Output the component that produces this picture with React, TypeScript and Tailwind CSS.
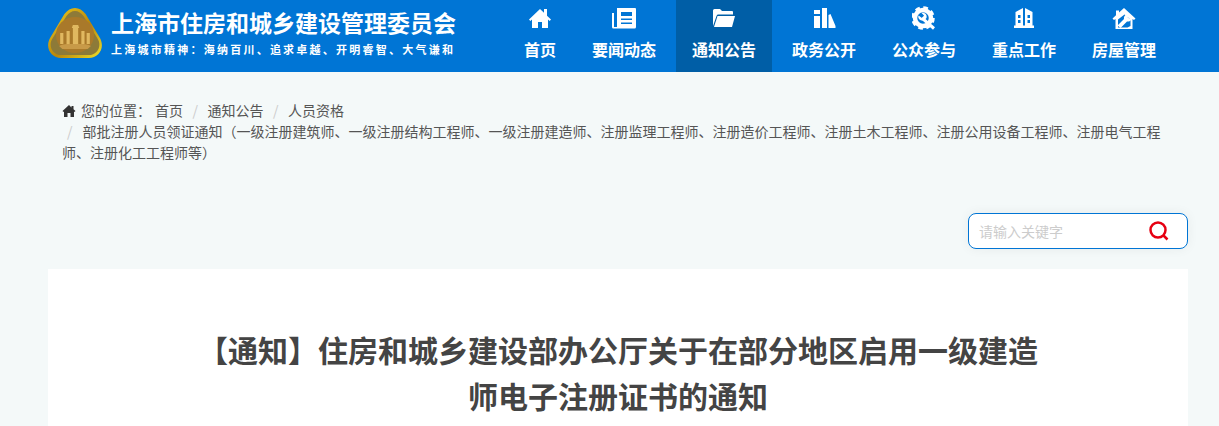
const sans = "font-['Microsoft_YaHei','Noto_Sans_CJK_SC','Liberation_Sans',sans-serif]";

const nav = [
  { label: "首页", icon: "home" },
  { label: "要闻动态", icon: "news" },
  { label: "通知公告", icon: "folder", active: true },
  { label: "政务公开", icon: "books" },
  { label: "公众参与", icon: "gear" },
  { label: "重点工作", icon: "building" },
  { label: "房屋管理", icon: "house" },
];

function NavIcon({ name, bg }: { name: string; bg: string }) {
  if (name === "home")
    return (
      <svg width="24" height="24" viewBox="0 0 24 24" fill="#fff">
        <path d="M12 4 1 14.500l1.300 1.500L4 14.600V23h6v-6h4v6h6v-8.400l1.700 1.400 1.300-1.500-4-3.800V4h-3v3.800z" transform="translate(0 -1)" />
      </svg>
    );
  if (name === "news")
    return (
      <svg width="26" height="24" viewBox="0 0 26 24" fill="#fff">
        <path fillRule="evenodd" d="M6 2h18a1 1 0 0 1 1 1v18a1.500 1.500 0 0 1-1.500 1.500h-21A1.500 1.500 0 0 1 1 21V7h2v14h3zm4 4v4h11V6zm0 6.500V14h11v-1.500zm0 4V18h11v-1.500z" />
      </svg>
    );
  if (name === "folder")
    return (
      <svg width="24" height="24" viewBox="0 0 24 24" fill="#fff">
        <path d="M1 20V4.500A1.500 1.500 0 0 1 2.500 3H8l2 2h10a1 1 0 0 1 1 1v2.500H6.500a2 2 0 0 0-2 1.400z" />
        <path d="M5.500 10H23l-3 11H2z" />
      </svg>
    );
  if (name === "books")
    return (
      <svg width="24" height="24" viewBox="0 0 24 24" fill="#fff">
        <path d="M2 10h6v12H2zM2 4h6v4H2zM10 2h5v20h-5zM16.500 9l2-1 5 12v2h-7z" />
      </svg>
    );
  if (name === "gear")
    return (
      <svg width="24" height="24" viewBox="0 0 24 24" fill="none">
        <circle cx="11" cy="12" r="8" stroke="#fff" strokeWidth="4.500" />
        <circle cx="11" cy="12" r="10" stroke="#fff" strokeWidth="3.500" strokeDasharray="4.500 3.350" />
        <path d="m10 12 12 10.500" stroke="#fff" strokeWidth="3" />
        <path d="M6.500 9.500 10 12l2-2.500L9.500 7c3-.8 6 1.500 5 5l-2.500 2.500c-4 .500-6.500-2-5.500-5z" fill="#fff" />
      </svg>
    );
  if (name === "building")
    return (
      <svg width="24" height="24" viewBox="0 0 24 24" fill="#fff">
        <path fillRule="evenodd" d="M3.500 6 11 2v18H3.500zM13 2l7.500 4v14H13zM6 9v3h2.500V9zm0 5v3h2.500v-3zm9.500-5v3H18V9zm0 5v3H18v-3z" />
        <path d="M2 19.500h20V22H2z" />
      </svg>
    );
  return (
    <svg width="24" height="24" viewBox="0 0 24 24" fill="#fff">
      <path d="M12 2 23.500 12.500 22 14l-1.500-1V23h-17V13L2 14 .5 12.500 4 9.300V4.500h3v2z" />
      <path d="M12.500 8.500 18.500 13.500v6.500l-3 1.500H6v-8z" fill={bg} />
      <path d="M17 8c-3-.5-5.500 2-5 5l-6.500 6.500 3 2.500 6.500-6.500c3 .5 5.500-2 5-5l-2.500 2.300-2-1.800 2.300-2.500c-.2-.2-.5-.4-.8-.5z" />
    </svg>
  );
}

function Logo() {
  return (
    <svg width="54" height="50" viewBox="1.500 0 51 50" preserveAspectRatio="none" className="mt-[8px] shrink-0">
      <defs>
        <linearGradient id="rim" x1="0" y1="0" x2="1" y2="1">
          <stop offset="0" stopColor="#f0d020" />
          <stop offset="0.55" stopColor="#b8860b" />
          <stop offset="1" stopColor="#efe02a" />
        </linearGradient>
      </defs>
      <path d="M27 0c4 0 7 2 10 6l13 23c6 10 0 21-10 21H14C4 50-2 39 4 29L17 6c3-4 6-6 10-6z" fill="url(#rim)" />
      <path d="M27 3c3 0 6 2 8 5l13 22c5 8 0 17-8 17H14C6 47 1 38 6 30L19 8c2-3 5-5 8-5z" fill="#8d7a38" />
      <circle cx="27" cy="27" r="18" fill="#a9792a" />
      <path d="M12 38c4-2 6-2 15-2s11 0 15 2l-3 3H15z" fill="#c89a48" />
      <path d="M13 36V25h3v11zM19 36V23h3v13zM25 36V20h5v16zM33 36V23h3v13zM38 36V25h3v11z" fill="#e0b860" />
      <path d="M24 20h7l-1-3h-5z" fill="#e0b860" />
    </svg>
  );
}

export default function App() {
  return (
    <div className={`h-[426px] overflow-hidden bg-[#f4f9f9] ${sans}`}>
      <header className="flex h-[72px] bg-[#0075d5] pl-[48px]">
        <div className="flex w-[460px] shrink-0 items-start gap-[9px]">
          <Logo />
          <div className="mt-[7px] text-white">
            <div className="text-[23px] leading-[30px] font-bold whitespace-nowrap">上海市住房和城乡建设管理委员会</div>
            <div className="mt-[4px] text-[11px] leading-[16px] font-bold tracking-[2.240px] whitespace-nowrap">
              上海城市精神：海纳百川、追求卓越、开明睿智、大气谦和
            </div>
          </div>
        </div>
        <nav className="flex gap-[4px]">
          {nav.map((n) => (
            <div
              key={n.label}
              className={`flex flex-col items-center px-[16px] pt-[6px] text-white ${n.active ? "bg-[#005ea6]" : ""}`}
            >
              <div className="flex h-[24px] items-center">
                <NavIcon name={n.icon} bg={n.active ? "#005ea6" : "#0075d5"} />
              </div>
              <span className="mt-[7px] text-[16px] leading-[24px] font-bold whitespace-nowrap">{n.label}</span>
            </div>
          ))}
        </nav>
      </header>

      <div className="pl-[62px] pt-[28px] pr-[56px] text-[14px] leading-[21px] text-[#555]">
        <svg width="14" height="14" viewBox="0 0 14 14" className="mr-[5px] inline-block -translate-y-[1px]" fill="#333">
          <path d="M7 1 .5 7l.9 1L2 7.500V13h3.500V9h3v4H12V7.500l.6.5.9-1L11.500 5.200V2h-2v1.400z" />
        </svg>
        <span>您的位置：</span>
        <span className="ml-[4px]">首页</span>
        <span className="mx-[9.500px] text-[#ccc]">/</span>
        <span>通知公告</span>
        <span className="mx-[9.500px] text-[#ccc]">/</span>
        <span>人员资格</span>
        <br />
        <span className="ml-[5px] mr-[10px] text-[#ccc]">/</span>
        <span>
          部批注册人员领证通知（一级注册建筑师、一级注册结构工程师、一级注册建造师、注册监理工程师、注册造价工程师、注册土木工程师、注册公用设备工程师、注册电气工程师、注册化工工程师等）
        </span>
      </div>

      <div className="mt-[50px] flex justify-end pr-[31px]">
        <div className="flex h-[36px] w-[220px] items-center justify-between rounded-[8px] border border-[#0075d5] bg-white pl-[10px] pr-[17px] shadow-[0_0_12px_rgba(0,0,0,0.06)]">
          <span className="text-[14px] text-[#ccc]">请输入关键字</span>
          <svg width="22" height="22" viewBox="0 0 22 22" fill="none" stroke="#e60012" strokeWidth="2.500">
            <circle cx="10" cy="10" r="7.500" />
            <path d="m15.500 15.500 4 4" />
          </svg>
        </div>
      </div>

      <main className="mr-[31px] ml-[48px] mt-[20px] h-[200px] bg-white px-[150px] pt-[57px] text-center text-[30px] leading-[46px] font-bold text-[#444]">
        【通知】住房和城乡建设部办公厅关于在部分地区启用一级建造师电子注册证书的通知
      </main>
    </div>
  );
}
